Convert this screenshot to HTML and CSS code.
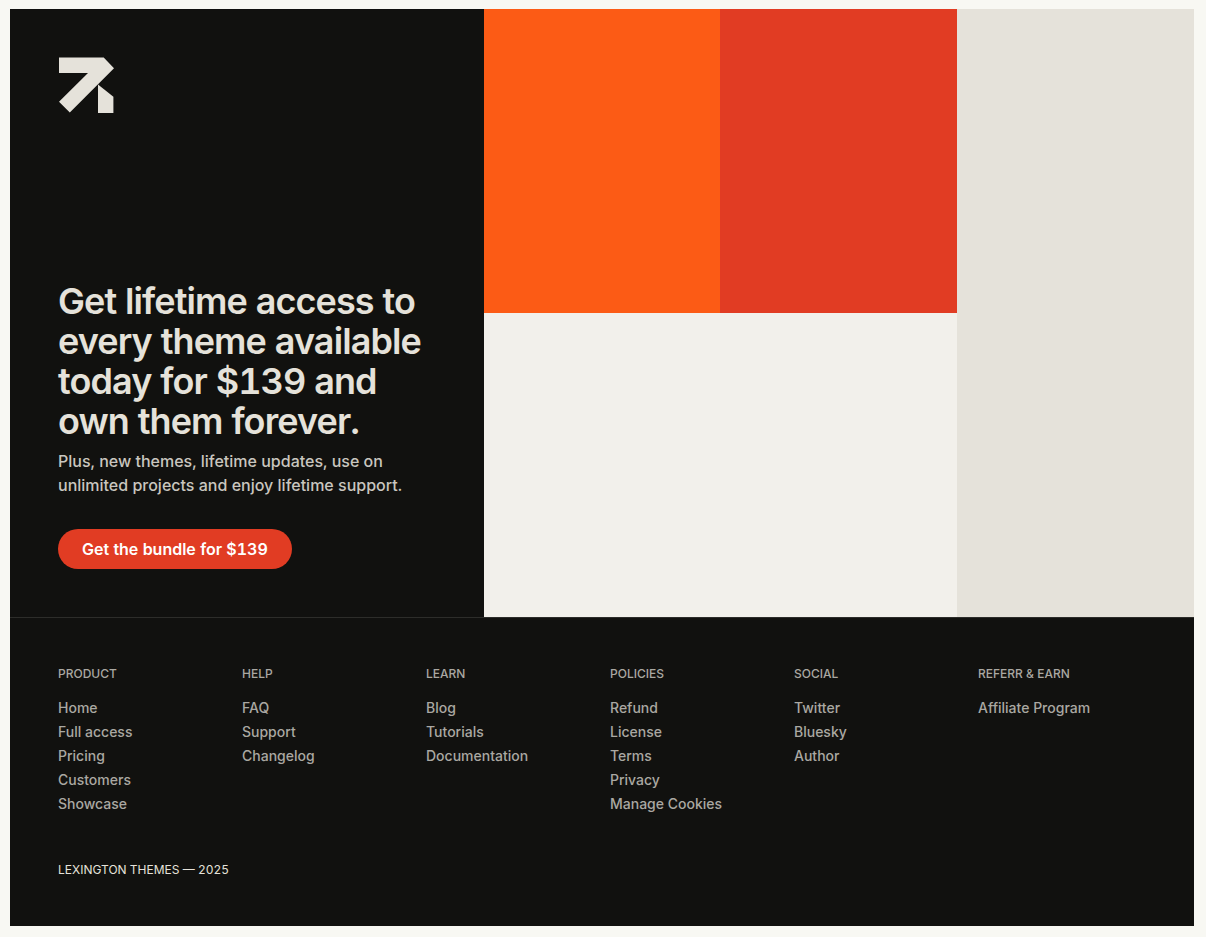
FILE: index.html
```html
<!DOCTYPE html>
<html lang="en">
<head>
  <meta charset="utf-8">
  <meta name="viewport" content="width=device-width, initial-scale=1">
  <title>Lexington Themes</title>
  <link rel="stylesheet" href="styles.css">
</head>
<body>
  <section class="cta">
    <div class="cta-content">
      <a href="#" class="logo" aria-label="Lexington Themes">
        <svg width="56" height="56" viewBox="0 0 56 56" fill="currentColor" aria-hidden="true">
          <path d="M1 0.6H45.7L56 11.2L11.8 55.4L1 44.7L30 15.9H1Z"/>
          <path d="M40 27.6L55.4 39.8V56H40Z"/>
        </svg>
      </a>
      <div>
        <h2>Get lifetime access to every theme available today for $139 and own them forever.</h2>
        <p>Plus, new themes, lifetime updates, use on unlimited projects and enjoy lifetime support.</p>
        <a href="#" class="button">Get the bundle for $139</a>
      </div>
    </div>
    <div class="tile orange"></div>
    <div class="tile red"></div>
    <div class="tile light"></div>
    <div class="tile sand"></div>
  </section>

  <footer class="footer">
    <nav class="footer-links">
      <div>
        <h3>Product</h3>
        <ul>
          <li><a href="#">Home</a></li>
          <li><a href="#">Full access</a></li>
          <li><a href="#">Pricing</a></li>
          <li><a href="#">Customers</a></li>
          <li><a href="#">Showcase</a></li>
        </ul>
      </div>
      <div>
        <h3>Help</h3>
        <ul>
          <li><a href="#">FAQ</a></li>
          <li><a href="#">Support</a></li>
          <li><a href="#">Changelog</a></li>
        </ul>
      </div>
      <div>
        <h3>Learn</h3>
        <ul>
          <li><a href="#">Blog</a></li>
          <li><a href="#">Tutorials</a></li>
          <li><a href="#">Documentation</a></li>
        </ul>
      </div>
      <div>
        <h3>Policies</h3>
        <ul>
          <li><a href="#">Refund</a></li>
          <li><a href="#">License</a></li>
          <li><a href="#">Terms</a></li>
          <li><a href="#">Privacy</a></li>
          <li><a href="#">Manage Cookies</a></li>
        </ul>
      </div>
      <div>
        <h3>Social</h3>
        <ul>
          <li><a href="#">Twitter</a></li>
          <li><a href="#">Bluesky</a></li>
          <li><a href="#">Author</a></li>
        </ul>
      </div>
      <div>
        <h3>Referr &amp; Earn</h3>
        <ul>
          <li><a href="#">Affiliate Program</a></li>
        </ul>
      </div>
    </nav>
    <p class="copyright">Lexington Themes — 2025</p>
  </footer>
</body>
</html>
```
FILE: styles.css
```css
* {
  box-sizing: border-box;
}

body {
  margin: 0;
  padding: 9px 12px 11px 10px;
  background-color: #f8f8f3;
  color: #e5e2da;
  font-family: Inter, "Liberation Sans", sans-serif;
  font-weight: 500;
  font-variant-numeric: tabular-nums;
}

h2, h3, p, ul {
  margin: 0;
  padding: 0;
}

ul {
  list-style: none;
}

a {
  color: inherit;
  text-decoration: none;
}

.cta {
  display: grid;
  grid-template-columns: repeat(5, 1fr);
  grid-template-rows: 1fr 1fr;
  min-height: 608px;
}

.cta-content {
  grid-column: 1 / 3;
  grid-row: 1 / 3;
  display: flex;
  flex-direction: column;
  justify-content: space-between;
  padding: 48px;
  background-color: #11110f;
}

.logo {
  align-self: flex-start;
}

.logo svg {
  display: block;
}

.cta-content h2 {
  font-size: 36px;
  line-height: 40px;
  font-weight: 600;
  letter-spacing: -0.025em;
  font-optical-sizing: none;
}

.cta-content p {
  margin-top: 8px;
  font-size: 16px;
  line-height: 24px;
  color: #c9c6bf;
}

.button {
  display: inline-flex;
  align-items: center;
  height: 40px;
  margin-top: 32px;
  padding: 0 24px;
  border-radius: 20px;
  background-color: #e13c23;
  color: #fff;
  font-size: 16px;
  font-weight: 600;
  vertical-align: top;
}

.orange {
  background-color: #fc5b15;
}

.red {
  background-color: #e13c23;
}

.light {
  grid-column: 3 / 5;
  grid-row: 2;
  background-color: #f2f0eb;
}

.sand {
  grid-column: 5;
  grid-row: 1 / 3;
  background-color: #e5e2da;
}

.footer {
  padding: 48px;
  border-top: 1px solid #2d2d2a;
  background-color: #11110f;
}

.footer-links {
  display: grid;
  grid-template-columns: repeat(6, 1fr);
  gap: 16px;
  color: #aaa8a2;
}

.footer-links h3 {
  font-size: 12px;
  line-height: 16px;
  font-weight: 500;
  text-transform: uppercase;
}

.footer-links ul {
  display: flex;
  flex-direction: column;
  gap: 4px;
  margin-top: 16px;
  font-size: 14px;
  line-height: 20px;
}

.footer-links a {
  display: block;
}

.copyright {
  margin-top: 48px;
  font-size: 12px;
  line-height: 16px;
  font-weight: 400;
  text-transform: uppercase;
}
```
